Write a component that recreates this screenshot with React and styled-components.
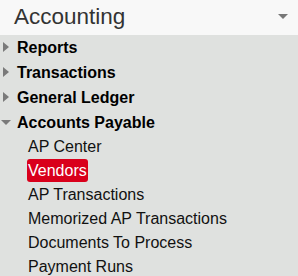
import styled, { createGlobalStyle } from 'styled-components';

const GlobalStyle = createGlobalStyle`
    html, body {
        margin: 0;
        padding: 0;
        background: #dfe1df;
    }
    body {
        font-family: "Liberation Sans", Arial, sans-serif;
    }
`;

const Panel = styled.div`
    width: 298px;
    height: 276px;
    overflow: hidden;
    background: #dfe1df;
`;

const Header = styled.div`
    height: 35px;
    display: flex;
    align-items: center;
    justify-content: space-between;
    padding: 0 10px 0 14px;
    box-sizing: border-box;
    background: #f8f8f8;
`;

const Title = styled.span`
    font-size: 22.5px;
    color: #333;
    line-height: 1;
    margin-top: -1px;
`;

const Caret = styled.span`
    width: 0;
    height: 0;
    border-left: 5px solid transparent;
    border-right: 5px solid transparent;
    border-top: 5px solid #777;
    margin-top: -3px;
`;

const Tree = styled.ul`
    list-style: none;
    margin: 0;
    padding: 0;
`;

const Group = styled.li`
    margin: 0;
`;

const GroupRow = styled.div`
    height: 25px;
    display: flex;
    align-items: center;
    font-size: 16px;
    font-weight: bold;
    color: #000;
`;

const Arrow = styled.span`
    width: 17px;
    display: flex;
    padding-left: ${p => (p.open ? '1px' : '3px')};
    box-sizing: border-box;

    &::before {
        content: '';
        width: 0;
        height: 0;
        ${p => p.open
        ? `border-left: 5px solid transparent;
           border-right: 5px solid transparent;
           border-top: 5px solid #7a7a7a;
           margin-top: 0px;`
        : `border-top: 5px solid transparent;
           border-bottom: 5px solid transparent;
           border-left: 6px solid #7a7a7a;
           margin-top: -1px;`}
    }
`;

const Items = styled.ul`
    list-style: none;
    margin: 0;
    padding: 0;
`;

const Item = styled.li`
    height: 24px;
    line-height: 24px;
    padding-left: 27px;
    font-size: 16px;
    color: #111;
`;

const Link = styled.span`
    display: inline-block;
    padding: 0 1px;
    line-height: 23px;
    border-radius: 3px;
    vertical-align: top;
    ${p => p.active && `
        background: #d9001b;
        color: #fff;
    `}
`;

const groups = [
    { label: 'Reports' },
    { label: 'Transactions' },
    { label: 'General Ledger' },
    {
        label: 'Accounts Payable',
        open: true,
        items: [
            'AP Center',
            'Vendors',
            'AP Transactions',
            'Memorized AP Transactions',
            'Documents To Process',
            'Payment Runs',
        ],
    },
];

const App = () => {
    return (
        <Panel>
            <GlobalStyle />
            <Header>
                <Title>Accounting</Title>
                <Caret />
            </Header>
            <Tree>
                {groups.map(g => (
                    <Group key={g.label}>
                        <GroupRow>
                            <Arrow open={g.open} />
                            {g.label}
                        </GroupRow>
                        {g.open &&
                            <Items>
                                {g.items.map(item => (
                                    <Item key={item}>
                                        <Link active={item === 'Vendors'}>{item}</Link>
                                    </Item>
                                ))}
                            </Items>
                        }
                    </Group>
                ))}
            </Tree>
        </Panel>
    );
};

export default App;
